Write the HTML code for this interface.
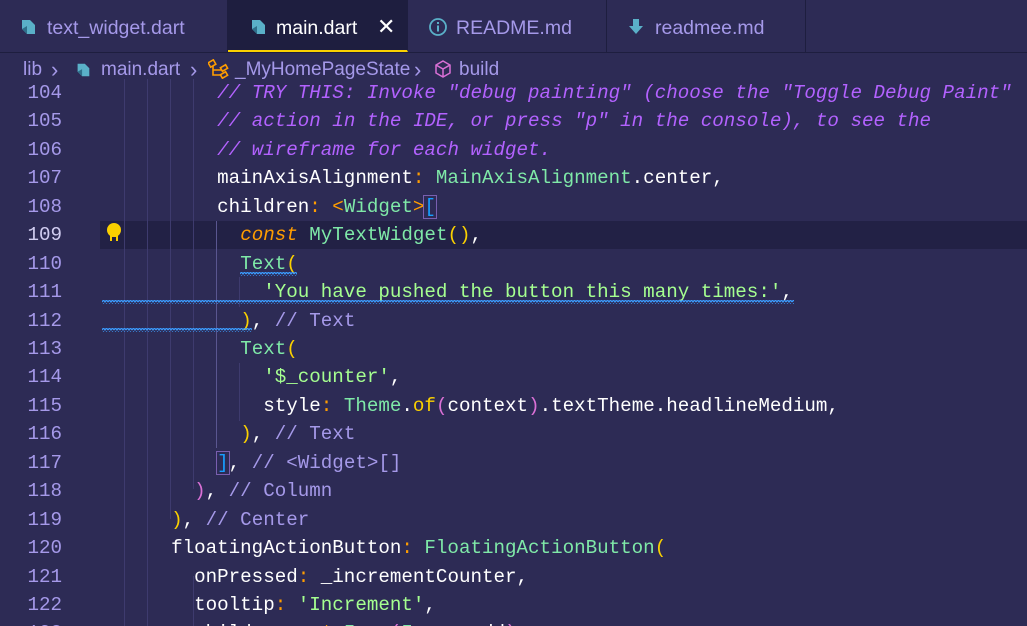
<!DOCTYPE html>
<html><head><meta charset="utf-8"><style>
*{margin:0;padding:0;box-sizing:border-box}
body{width:1027px;height:626px;overflow:hidden;background:#2d2b55;font-family:"Liberation Sans",sans-serif;position:relative}
#tabs{position:absolute;left:0;top:0;width:1027px;height:53px;background:#2d2b55;border-bottom:1px solid #1e1e3f}
.tab{position:absolute;top:0;height:52px;border-right:1px solid #1e1e3f;color:#a599e9;font-size:19.5px;line-height:56px;padding-left:18px}
.tab.act{background:#1e1e3f;color:#fff;border-bottom:2px solid #fad000}
.tab svg{position:absolute;top:17px}
#bc{position:absolute;top:53px;left:0;width:1027px;height:33px;color:#a599e9;font-size:19px;line-height:34px}
#bc span{position:absolute;top:0}
.ch{font-size:22px;color:#a599e9}
#code{position:absolute;top:79px;left:0;width:1027px;height:547px;overflow:hidden;font-family:"Liberation Mono",monospace;font-size:19.2px}
.ln{position:absolute;left:0;width:62px;text-align:right;color:#a599e9;height:28px;line-height:28px}
.l{position:absolute;left:102px;white-space:pre;color:#fff;height:28px;line-height:28px}
.c{color:#b362ff;font-style:italic}.cm{color:#a599e9}
.k{color:#ff9d00;font-style:italic}.o{color:#ff9d00}
.t{color:#7fe9a8}.s{color:#a5ff90}.y{color:#fad000}.p{color:#da70d6}.b{color:#179fff}
.g{position:absolute;width:1px;background:#3e3b6e}
</style></head><body>
<div id="tabs">
 <div class="tab" style="left:0;width:228px"><svg width="20" height="20" viewBox="0 0 20 20" style="left:18px"><path d="M4 3h8l5 5v9H9L4 12z" fill="#5ab0c8"/><path d="M4 12l5 5V9z" fill="#2f6f8a"/></svg><span style="margin-left:29px">text_widget.dart</span></div>
 <div class="tab act" style="left:228px;width:180px"><svg width="20" height="20" viewBox="0 0 20 20" style="left:20px"><path d="M4 3h8l5 5v9H9L4 12z" fill="#5ab0c8"/><path d="M4 12l5 5V9z" fill="#2f6f8a"/></svg><span style="margin-left:30px">main.dart</span><span style="position:absolute;left:149px;top:-1px;font-size:22px">✕</span></div>
 <div class="tab" style="left:408px;width:199px"><svg width="20" height="20" viewBox="0 0 20 20" style="left:20px"><circle cx="10" cy="10" r="8" fill="none" stroke="#5ab0c8" stroke-width="1.8"/><rect x="9" y="8.5" width="2" height="6" fill="#5ab0c8"/><rect x="9" y="5" width="2" height="2" fill="#5ab0c8"/></svg><span style="margin-left:30px">README.md</span></div>
 <div class="tab" style="left:607px;width:199px"><svg width="20" height="20" viewBox="0 0 20 20" style="left:20px"><path d="M6 2h6v7h4l-7 8-7-8h4z" fill="#5ab0c8"/></svg><span style="margin-left:30px">readmee.md</span></div>
</div>
<div id="bc">
 <span style="left:23px">lib</span><span class="ch" style="left:51px">›</span>
 <svg width="18" height="18" viewBox="0 0 20 20" style="position:absolute;left:74px;top:8px"><path d="M4 3h8l5 5v9H9L4 12z" fill="#5ab0c8"/><path d="M4 12l5 5V9z" fill="#2f6f8a"/></svg>
 <span style="left:101px">main.dart</span><span class="ch" style="left:190px">›</span>
 <svg width="22" height="20" viewBox="0 0 22 20" style="position:absolute;left:208px;top:6px" fill="none" stroke="#ff9d00" stroke-width="1.6"><rect x="1" y="2" width="6" height="5" transform="rotate(-30 4 4.5)"/><rect x="13" y="7" width="6" height="4" transform="rotate(-30 16 9)"/><rect x="13" y="14" width="6" height="4" transform="rotate(-30 16 16)"/><path d="M5 7v9h8M5 11h8"/></svg>
 <span style="left:235px">_MyHomePageState</span><span class="ch" style="left:414px">›</span>
 <svg width="20" height="20" viewBox="0 0 20 20" style="position:absolute;left:433px;top:6px" fill="none" stroke="#da70d6" stroke-width="1.5"><path d="M10 2l7 4v8l-7 4-7-4V6z M3 6l7 4 7-4 M10 10v8"/></svg>
 <span style="left:459px">build</span>
</div>
<div id="code">
<div style="position:absolute;left:100px;top:142px;width:927px;height:28px;background:#222145"></div>
<div class="g" style="left:124px;top:0;height:547px"></div>
<div class="g" style="left:147px;top:0;height:547px"></div>
<div class="g" style="left:170px;top:0;height:440px"></div>
<div class="g" style="left:193px;top:0;height:410px"></div>
<div class="g" style="left:216px;top:142px;height:227px;background:#5a5690"></div>
<div class="g" style="left:239px;top:198px;height:30px"></div>
<div class="g" style="left:239px;top:284px;height:58px"></div>
<div class="g" style="left:193px;top:497px;height:50px"></div>
<svg width="20" height="22" viewBox="0 0 20 22" style="position:absolute;left:104px;top:143px"><circle cx="10" cy="8" r="7" fill="#fad000"/><rect x="6" y="12" width="8" height="7" fill="#fad000"/><rect x="8" y="15" width="4" height="4" fill="#222145"/></svg>
<div class="ln" style="top:0">104</div><div class="l" style="top:0">          <span class="c">// TRY THIS: Invoke "debug painting" (choose the "Toggle Debug Paint"</span></div>
<div class="ln" style="top:28.4px">105</div><div class="l" style="top:28.4px">          <span class="c">// action in the IDE, or press "p" in the console), to see the</span></div>
<div class="ln" style="top:56.9px">106</div><div class="l" style="top:56.9px">          <span class="c">// wireframe for each widget.</span></div>
<div class="ln" style="top:85.3px">107</div><div class="l" style="top:85.3px">          mainAxisAlignment<span class="o">:</span> <span class="t">MainAxisAlignment</span>.center,</div>
<div class="ln" style="top:113.8px">108</div><div class="l" style="top:113.8px">          children<span class="o">:</span> <span class="o">&lt;</span><span class="t">Widget</span><span class="o">&gt;</span><span class="b" style="outline:1px solid #7a5fb0">[</span></div>
<div class="ln" style="top:142.2px;color:#d0ccf0">109</div><div class="l" style="top:142.2px">            <span class="k">const</span> <span class="t">MyTextWidget</span><span class="y">()</span>,</div>
<div class="ln" style="top:170.6px">110</div><div class="l" style="top:170.6px">            <span class="t">Text</span><span class="y">(</span></div>
<div class="ln" style="top:199.1px">111</div><div class="l" style="top:199.1px">              <span class="s">'You have pushed the button this many times:'</span>,</div>
<div class="ln" style="top:227.5px">112</div><div class="l" style="top:227.5px">            <span class="y">)</span>, <span class="cm">// Text</span></div>
<div class="ln" style="top:256px">113</div><div class="l" style="top:256px">            <span class="t">Text</span><span class="y">(</span></div>
<div class="ln" style="top:284.4px">114</div><div class="l" style="top:284.4px">              <span class="s">'$_counter'</span>,</div>
<div class="ln" style="top:312.8px">115</div><div class="l" style="top:312.8px">              style<span class="o">:</span> <span class="t">Theme</span>.<span class="y">of</span><span class="p">(</span>context<span class="p">)</span>.textTheme.headlineMedium,</div>
<div class="ln" style="top:341.3px">116</div><div class="l" style="top:341.3px">            <span class="y">)</span>, <span class="cm">// Text</span></div>
<div class="ln" style="top:369.7px">117</div><div class="l" style="top:369.7px">          <span class="b" style="outline:1px solid #7a5fb0">]</span>, <span class="cm">// &lt;Widget&gt;[]</span></div>
<div class="ln" style="top:398.2px">118</div><div class="l" style="top:398.2px">        <span class="p">)</span>, <span class="cm">// Column</span></div>
<div class="ln" style="top:426.6px">119</div><div class="l" style="top:426.6px">      <span class="y">)</span>, <span class="cm">// Center</span></div>
<div class="ln" style="top:455px">120</div><div class="l" style="top:455px">      floatingActionButton<span class="o">:</span> <span class="t">FloatingActionButton</span><span class="y">(</span></div>
<div class="ln" style="top:483.5px">121</div><div class="l" style="top:483.5px">        onPressed<span class="o">:</span> _incrementCounter,</div>
<div class="ln" style="top:511.9px">122</div><div class="l" style="top:511.9px">        tooltip<span class="o">:</span> <span class="s">'Increment'</span>,</div>
<div class="ln" style="top:540.4px">123</div><div class="l" style="top:540.4px">        child<span class="o">:</span> <span class="k">const</span> <span class="t">Icon</span><span class="p">(</span><span class="t">Icons</span>.add<span class="p">)</span>,</div>
<svg style="position:absolute;left:0;top:0" width="1027" height="547">
<defs><pattern id="w" width="6" height="4" patternUnits="userSpaceOnUse"><path d="M0 3L1.5 1L3 3L4.5 1L6 3" fill="none" stroke="#3b9cff" stroke-width="1.2"/><path d="M0 3Q1.5 0 3 2T6 3" fill="none" stroke="none"/></pattern></defs>
<rect x="240" y="193" width="57" height="4" fill="url(#w)"/>
<rect x="102" y="221" width="692" height="4" fill="url(#w)"/>
<rect x="102" y="249" width="150" height="4" fill="url(#w)"/>
</svg>
</div>
</body></html>
